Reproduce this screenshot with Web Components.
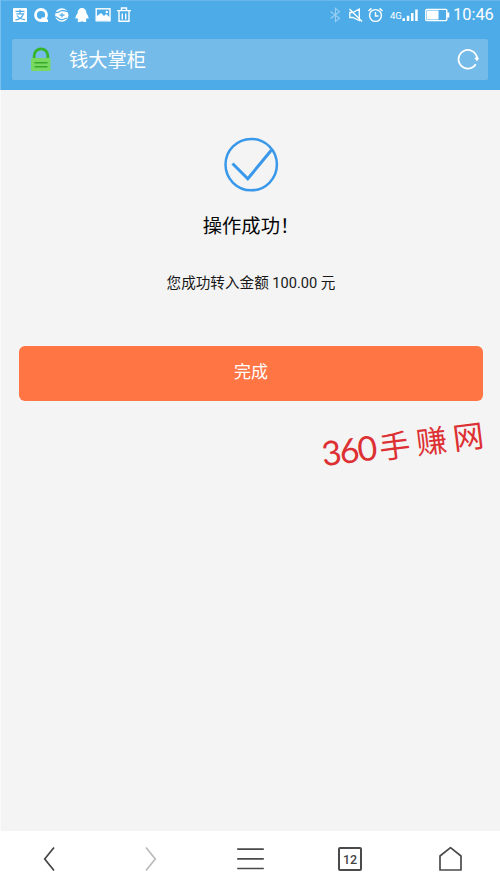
<!DOCTYPE html>
<html lang="zh-CN">
<head>
<meta charset="utf-8">
<title>钱大掌柜</title>
<style>
html,body{margin:0;height:100%;overflow:hidden}
body{font-family:Roboto,"Noto Sans CJK SC",sans-serif;background:#f4f4f4}
</style>
</head>
<body>
<phone-screen></phone-screen>
<script>
const define = (name, html) => customElements.define(name, class extends HTMLElement {
  constructor() {
    super();
    this.attachShadow({mode: 'open'}).innerHTML = html;
  }
});

const icons = {
  pay: ['16 16', '<path fill="#fff" d="M2 1h12a1 1 0 0 1 1 1v12a1 1 0 0 1-1 1H2a1 1 0 0 1-1-1V2a1 1 0 0 1 1-1z"/><path fill="none" stroke="#4dace8" stroke-width="1.2" d="M3.5 4.3h9M8 2.4V6.7M4.4 6.8h7.2C10 10.5 7 12.7 3.3 13M4.8 8.5c2 2.5 5 3.8 8.2 4.2"/>'],
  bubble: ['16 16', '<circle cx="8" cy="8" r="5.5" fill="none" stroke="#fff" stroke-width="2.8"/><path fill="#fff" d="M8.5 10.5h4L15 13v2H8z"/>'],
  globe: ['16 16', '<circle cx="7.8" cy="8" r="6.7" fill="#fff"/><path d="M1.500 5.500C4 6.500 6 3.500 8.500 3.300c2 0 3.500 1.500 6 1.200M1 10c2.500-.5 3.500 2.500 6.500 2.700 2.500 0 4-1.700 6-1.700M5.500 8.200h5M8 6v4.500" fill="none" stroke="#4dace8" stroke-width="1.2"/>'],
  penguin: ['16 16', '<path fill="#fff" d="M8 1C5.300 1 3.600 3 3.600 6.200 2.400 7.800 1.300 9.800 1.500 11.400c.1.700 1 .2 1.700-.7.1 1 .5 1.600 1 2.200-1.200.8-.7 2.100.9 2.100 1.300 0 2.200-.3 2.900-.7.7.4 1.600.7 2.900.7 1.600 0 2.100-1.300.9-2.100.5-.6.9-1.200 1-2.200.7.9 1.600 1.400 1.700.7.2-1.600-.9-3.600-2.100-5.200C12.400 3 10.700 1 8 1z"/>'],
  image: ['16 16', '<rect x="1.200" y="1.800" width="13.800" height="12" fill="none" stroke="#fff" stroke-width="1.400"/><path fill="#fff" d="M2 12V9l4-3 3 3 2-2 4 3.500V13H2z"/><circle cx="11.800" cy="5" r="1.200" fill="#fff"/>'],
  trash: ['16 16', '<path fill="none" stroke="#fff" stroke-width="1.400" d="M1 3.600h14M5.500 3.500V1h5v2.500M3 4v10.300h10V4M6.300 6.500v6M9.700 6.500v6"/>'],
  bluetooth: ['16 16', '<path fill="none" stroke="#9bcff2" stroke-width="1.100" d="M2.500 4.500 11.500 11.300 7.500 14.600V1.400L11.500 4.700 2.500 11.500"/>'],
  mute: ['16 16', '<path fill="none" stroke="#fff" stroke-width="1.300" d="M1.800 5.500h3l6.500-3.500V13.500L4.800 10.500h-3zM1.500 2l12.500 12.500"/>'],
  alarm: ['16 16', '<circle cx="7.500" cy="8.500" r="5.900" fill="none" stroke="#fff" stroke-width="1.400"/><path fill="none" stroke="#fff" stroke-width="1.400" d="M7.500 5v4h3M.5 4l3-2.600M14.500 4l-3-2.600"/>'],
  signal: ['17 16', '<path fill="#fff" d="M.5 11.300H3V14H.500zM4.800 8.800h2.500V14H4.800zM9 6h2.500v8H9zM13.200 2.500h2.500V14h-2.500z"/>'],
  battery: ['25 14', '<rect x=".8" y="1.400" width="21" height="11.200" rx="1" fill="none" stroke="#fff" stroke-width="1.400"/><path fill="#fff" d="M2 2.500h11.500v9H2zM22 4.500h2.300v5H22z"/>'],
  lock: ['20 25', '<path d="M3.200 12V8.600a6.800 6.800 0 0 1 13.600 0V11" fill="none" stroke="#35b52c" stroke-width="2.800"/><rect x="0" y="11" width="19.500" height="13" rx="1.300" fill="#78d860"/><path d="M3.500 15.700h13M3.500 19.800h13" stroke="#35a92c" stroke-width="1.600"/>'],
  refresh: ['24 24', '<path d="M19.700 17.300A9.300 9.300 0 1 1 21 10.500" fill="none" stroke="#fff" stroke-width="1.800"/><path fill="#fff" d="M18.500 11.600 21 9.200l2 2.400-2 2.600z"/>'],
  success: ['56 56', '<circle cx="28.200" cy="27.600" r="25.700" fill="none" stroke="#3998ea" stroke-width="2.500"/><path d="M9.500 26.500 24.800 41.700 48.500 13" fill="none" stroke="#3998ea" stroke-width="3"/>'],
  back: ['28 28', '<path d="M18 2.500 8.700 14 18 25.500" fill="none" stroke="#444" stroke-width="1.700"/>'],
  forward: ['28 28', '<path d="M10 2.500 19.300 14 10 25.500" fill="none" stroke="#bbb" stroke-width="1.700"/>'],
  menu: ['28 28', '<path d="M1.200 4.200h26.600M1.200 13.900h26.600M1.200 23.500h26.600" stroke="#4a4a4a" stroke-width="1.700"/>'],
  home: ['28 28', '<path d="M4 25V11L14.500 2.600 25 11v14z" fill="none" stroke="#4a4a4a" stroke-width="1.700" stroke-linejoin="round"/>']
};

customElements.define('ui-icon', class extends HTMLElement {
  constructor() {
    super();
    this.attachShadow({mode: 'open'});
  }
  connectedCallback() {
    const [size, art] = icons[this.getAttribute('name')];
    const [w, h] = size.split(' ');
    this.shadowRoot.innerHTML = `<style>:host{display:block;flex:none;width:${w}px;height:${h}px}svg{display:block}</style><svg width="${w}" height="${h}" viewBox="0 0 ${w} ${h}">${art}</svg>`;
  }
});

define('status-bar', `
<style>
:host{display:flex;justify-content:space-between;height:30px;box-sizing:border-box;padding:0 7px 0 12px;color:#fff}
div{display:flex;align-items:center;height:30px}
.apps{gap:4.800px}
.system ui-icon{margin-right:4px}
.net{font-size:9.500px;letter-spacing:-.1px;width:12px;margin-left:2px;padding-top:1px}
.system ui-icon[name=signal]{margin-right:6px}
.time{font-size:16.400px;line-height:30px;width:40px;margin-left:-1px;white-space:nowrap}
</style>
<div class="apps"><ui-icon name="pay"></ui-icon><ui-icon name="bubble"></ui-icon><ui-icon name="globe"></ui-icon><ui-icon name="penguin"></ui-icon><ui-icon name="image"></ui-icon><ui-icon name="trash"></ui-icon></div>
<div class="system"><ui-icon name="bluetooth"></ui-icon><ui-icon name="mute"></ui-icon><ui-icon name="alarm"></ui-icon><span class="net">4G</span><ui-icon name="signal"></ui-icon><ui-icon name="battery"></ui-icon><span class="time">10:46</span></div>`);

define('address-bar', `
<style>
:host{display:flex;align-items:center;height:41px;margin:9px 12px 0;padding:0 8px 0 19px;box-sizing:border-box;background:#74bbea;border-radius:2px;color:#fff;font-size:19.300px}
span{flex:1;padding-left:18px;line-height:41px;padding-top:2px}
ui-icon[name=refresh]{margin-bottom:2px}
</style>
<ui-icon name="lock"></ui-icon><span><slot></slot></span><ui-icon name="refresh"></ui-icon>`);

define('result-panel', `
<style>
:host{display:flex;flex-direction:column;align-items:center;padding:47px 17px 0 19px}
ui-icon{margin-right:1px}
h1{font-size:19.300px;font-weight:400;line-height:28px;margin:20px 0 0;color:#050505}
p{font-size:14.600px;line-height:22px;margin:31px 0 0;color:#181818}
</style>
<ui-icon name="success"></ui-icon><h1><slot name="title"></slot></h1><p><slot name="detail"></slot></p><slot></slot>`);

define('action-button', `
<style>
:host{display:block;align-self:stretch;margin-top:52px}
button{display:block;width:100%;height:54.500px;padding:0 0 2px;border:0;border-radius:6px;background:#ff7544;color:#fff;font:17px/51px Roboto,"Noto Sans CJK SC",sans-serif}
</style>
<button><slot></slot></button>`);

define('water-mark', `
<style>
:host{position:absolute;left:321px;top:423px;display:flex;align-items:center;height:40px;color:#dd3033;white-space:nowrap;transform:rotate(-7deg);font-family:"Noto Sans CJK SC",sans-serif;font-weight:400}
.num{font-family:Lato,sans-serif;font-weight:400;font-size:34px;letter-spacing:-1.700px;line-height:40px}
.name{font-size:31px;letter-spacing:6px;line-height:40px;margin-left:4px}
</style>
<span class="num">360</span><span class="name">手赚网</span>`);

define('nav-bar', `
<style>
:host{display:grid;grid-template-columns:repeat(5,100px);justify-items:center;height:57px;box-sizing:border-box;background:#fff;padding-bottom:2px;align-items:center}
.tabs{box-sizing:border-box;width:24px;height:24px;border:2px solid #4a4a4a;border-radius:2px;font:500 12.500px/21px Roboto,sans-serif;text-align:center;color:#444}
</style>
<ui-icon name="back"></ui-icon><ui-icon name="forward"></ui-icon><ui-icon name="menu"></ui-icon><span class="tabs">12</span><ui-icon name="home"></ui-icon>`);

define('phone-screen', `
<style>
:host{display:flex;flex-direction:column;width:500px;height:888px;position:relative;background:#f4f4f4}
header{height:90px;background:#4dace8;box-shadow:inset 1px 0 #78c0ed,inset 0 1px #68b8eb}
main{flex:1;box-shadow:inset 1px 0 #fafafa}
</style>
<header><status-bar></status-bar><address-bar>钱大掌柜</address-bar></header>
<main><result-panel><span slot="title">操作成功！</span><span slot="detail">您成功转入金额 100.00 元</span><action-button>完成</action-button></result-panel></main>
<water-mark></water-mark>
<nav-bar></nav-bar>`);
</script>
</body>
</html>
